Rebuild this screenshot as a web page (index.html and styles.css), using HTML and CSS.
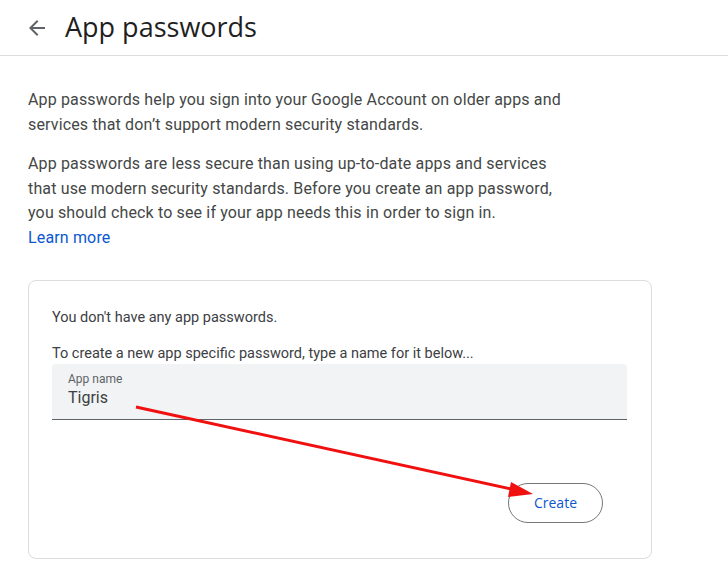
FILE: index.html
```html
<!DOCTYPE html>
<html lang="en">
<head>
  <meta charset="UTF-8" />
  <title>App passwords</title>
  <link rel="stylesheet" href="styles.css">
</head>
<body>

  <header class="top-bar">
    <button class="back-btn" aria-label="Back">
      <svg width="24" height="24" viewBox="0 0 24 24"><path d="M20 11H7.83l5.59-5.59L12 4l-8 8 8 8 1.41-1.41L7.83 13H20v-2z" fill="#5f6368"/></svg>
    </button>
    <h1>App passwords</h1>
  </header>

  <main class="page">
    <p class="intro">App passwords help you sign into your Google Account on older apps and services that don’t support modern security standards.</p>
    <p class="intro">App passwords are less secure than using up-to-date apps and services that use modern security standards. Before you create an app password, you should check to see if your app needs this in order to sign in.<br><a href="#" class="learn">Learn more</a></p>

    <section class="card">
      <p class="note">You don't have any app passwords.</p>
      <p class="note hint">To create a new app specific password, type a name for it below...</p>
      <div class="field">
        <label>App name</label>
        <div class="value">Tigris</div>
      </div>
      <div class="actions">
        <button class="create-btn">Create</button>
      </div>
    </section>
  </main>

  <svg class="annotation" width="728" height="565" viewBox="0 0 728 565">
    <line x1="136" y1="407" x2="516" y2="490" stroke="#f01010" stroke-width="3"/>
    <polygon points="533,494 511,482 508,497" fill="#f01010"/>
  </svg>

</body>
</html>
```

FILE: styles.css
```css
* {
  margin: 0;
  padding: 0;
  box-sizing: border-box;
}

body {
  background: #fff;
  font-family: Roboto, "Open Sans", sans-serif;
  color: #1f1f1f;
  position: relative;
  width: 728px;
  height: 565px;
  overflow: hidden;
}

.top-bar {
  display: flex;
  align-items: center;
  height: 56px;
  border-bottom: 1px solid #dadce0;
  padding-left: 25px;
}

.back-btn {
  width: 24px;
  height: 24px;
  border: none;
  background: none;
  display: flex;
  margin-right: 16px;
}

.top-bar h1 {
  font-family: "Open Sans", sans-serif;
  font-weight: 400;
  font-size: 27px;
  color: #1f1f1f;
  padding-bottom: 2px;
}

.page {
  padding: 32px 28px 0 28px;
}

.intro {
  font-size: 16px;
  line-height: 24.5px;
  letter-spacing: 0.15px;
  color: #444746;
  max-width: 540px;
  margin-bottom: 15px;
}

.learn {
  color: #0b57d0;
  text-decoration: none;
}

.card {
  margin-top: 30px;
  width: 624px;
  height: 279px;
  border: 1px solid #dadce0;
  border-radius: 8px;
  padding: 27px 24px 0 23px;
}

.note {
  font-size: 14.5px;
  color: #3c4043;
  line-height: 20px;
}

.hint {
  margin-top: 16px;
}

.field {
  background: #f1f3f4;
  border-radius: 4px 4px 0 0;
  border-bottom: 1px solid #5f6368;
  height: 56px;
  padding: 7px 16px 0;
  width: 575px;
}

.field label {
  display: block;
  font-size: 12px;
  color: #5f6368;
  line-height: 16px;
}

.value {
  font-size: 16px;
  color: #3c4043;
  line-height: 22px;
}

.actions {
  display: flex;
  justify-content: flex-end;
  margin-top: 63px;
  width: 575px;
  padding-right: 24px;
}

.create-btn {
  width: 95px;
  height: 40px;
  border: 1px solid #747775;
  border-radius: 20px;
  background: #fff;
  color: #0b57d0;
  font-family: "Open Sans", sans-serif;
  font-size: 14px;
  font-weight: 500;
  padding-bottom: 2px;
}

.annotation {
  position: absolute;
  left: 0;
  top: 0;
  pointer-events: none;
}
```
